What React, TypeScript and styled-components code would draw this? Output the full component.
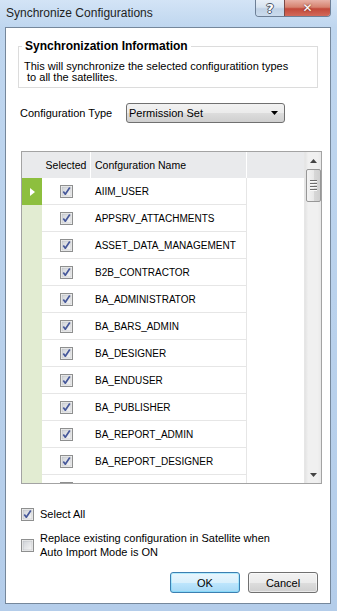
import React, { useId } from "react";
import styled, { createGlobalStyle } from "styled-components";

const Global = createGlobalStyle`
  html, body { margin: 0; padding: 0; background: #b6d0ec; }
  body { width: 337px; height: 611px; overflow: hidden; }
  * { box-sizing: border-box; }
`;

const Window = styled.div`
  width: 337px;
  height: 611px;
  display: flex;
  flex-direction: column;
  padding: 0 6px 7px 5px;
  background: linear-gradient(180deg, #d3e4f6 0px, #bfd6ef 27px, #b4cdea 100%);
  font-family: "Liberation Sans", Arial, sans-serif;
  font-size: 11px;
  color: #000;
`;

const TitleBar = styled.div`
  height: 27px;
  flex: none;
  display: flex;
  align-items: flex-start;
  padding-left: 1px;
`;

const Title = styled.div`
  font-size: 12px;
  line-height: 27px;
  color: #1e1e1e;
  font-family: "Liberation Sans", Arial, sans-serif;
`;

const CaptionButtons = styled.div`
  margin-left: auto;
  display: flex;
  border: 1px solid #6d7f96;
  border-top: none;
  border-radius: 0 0 4px 4px;
  overflow: hidden;
  height: 17px;
`;

const CapButton = styled.div<{ $close?: boolean }>`
  width: ${(p) => (p.$close ? 46 : 28)}px;
  height: 100%;
  display: flex;
  align-items: center;
  justify-content: center;
  font-family: "DejaVu Sans", sans-serif;
  font-weight: bold;
  font-size: ${(p) => (p.$close ? 12 : 13)}px;
  color: #fff;
  border-left: ${(p) => (p.$close ? "1px solid #7a4a46" : "none")};
  background: ${(p) =>
    p.$close
      ? "linear-gradient(180deg, #e8b1a6 0%, #d6826f 45%, #c3493a 55%, #d2695a 100%)"
      : "linear-gradient(180deg, #e8eff7 0%, #d7e3f0 45%, #c0d1e5 55%, #cbdbed 100%)"};
  text-shadow: ${(p) =>
    p.$close
      ? "0 0 2px #5a1d17"
      : "1px 0 0 #4a5566, -1px 0 0 #4a5566, 0 1px 0 #4a5566, 0 -1px 0 #4a5566"};
`;

const Client = styled.div`
  flex: 1;
  background: #fff;
  border: 1px solid #75879b;
  display: flex;
  flex-direction: column;
`;

const Group = styled.fieldset`
  margin: 12px 12px 0 12px;
  padding: 0 3px 4px 3px;
  border: 1px solid #dcdcdc;
  min-width: 0;
`;

const Legend = styled.legend`
  padding: 0 3px;
  font-weight: bold;
  font-size: 12px;
  line-height: 13px;
`;

const Description = styled.div`
  margin-top: 8px;
  padding-left: 2px;
  line-height: 11px;
  font-size: 11px;
  color: #000;
`;

const ConfigRow = styled.div`
  margin: 15px 0 0 14px;
  display: flex;
  align-items: center;
  height: 20px;
`;

const FieldLabel = styled.div`
  width: 106px;
  font-size: 11px;
`;

const Combo = styled.div`
  width: 159px;
  height: 20px;
  border: 1px solid #707070;
  border-radius: 3px;
  background: linear-gradient(180deg, #f2f2f2 0%, #ebebeb 50%, #dddddd 51%, #cfcfcf 100%);
  display: flex;
  align-items: center;
  padding: 0 6px 0 2px;
  font-size: 11px;
`;

const ComboText = styled.span`
  flex: 1;
`;

const Grid = styled.div`
  margin: 28px 0 0 15px;
  width: 301px;
  height: 333px;
  border: 1px solid #a3a3a3;
  display: flex;
  overflow: hidden;
`;

const GridMain = styled.div`
  flex: 1;
  display: flex;
  flex-direction: column;
  overflow: hidden;
  min-width: 0;
`;

const HeaderRow = styled.div`
  height: 26px;
  flex: none;
  display: flex;
  background: #e9eaec;
`;

const HeadCell = styled.div<{ $w?: number; $center?: boolean; $sep?: boolean }>`
  width: ${(p) => (p.$w ? `${p.$w}px` : "auto")};
  flex: ${(p) => (p.$w ? "none" : "1")};
  display: flex;
  align-items: center;
  justify-content: ${(p) => (p.$center ? "center" : "flex-start")};
  padding-left: ${(p) => (p.$center ? 0 : 4)}px;
  border-right: ${(p) => (p.$sep ? "1px solid #ffffff" : "none")};
  font-size: 10.5px;
  white-space: nowrap;
`;

const Body = styled.div`
  flex: 1;
  display: flex;
  overflow: hidden;
`;

const Rows = styled.div`
  display: flex;
  flex-direction: column;
`;

const Row = styled.div`
  display: flex;
  height: 27px;
  flex: none;
`;

const RowHead = styled.div<{ $current?: boolean }>`
  width: 20px;
  background: ${(p) => (p.$current ? "#8dbf3e" : "#e2ecd2")};
  display: flex;
  align-items: center;
  justify-content: center;
`;

const Cell = styled.div<{ $w: number; $center?: boolean; $last?: boolean }>`
  width: ${(p) => p.$w}px;
  border-bottom: 1px solid #e6e6e6;
  border-right: ${(p) => (p.$last ? "1px solid #e6e6e6" : "none")};
  display: flex;
  align-items: center;
  justify-content: ${(p) => (p.$center ? "center" : "flex-start")};
  padding-left: ${(p) => (p.$center ? 0 : 4)}px;
  font-size: 10px;
  white-space: nowrap;
  overflow: hidden;
`;

const Filler = styled.div`
  flex: 1;
  background: #fff;
`;

const ScrollBar = styled.div`
  width: 17px;
  flex: none;
  background: linear-gradient(90deg, #e3e3e3 0%, #f0f0f0 20%, #f0f0f0 80%, #e8e8e8 100%);
  border-left: 1px solid #e6e6e6;
  display: flex;
  flex-direction: column;
  align-items: center;
`;

const ArrowBox = styled.div`
  height: 17px;
  width: 100%;
  display: flex;
  align-items: center;
  justify-content: center;
  flex: none;
`;

const Thumb = styled.div`
  width: 15px;
  height: 33px;
  border: 1px solid #979797;
  border-radius: 2px;
  background: linear-gradient(90deg, #f3f3f3 0%, #e8e8e8 50%, #d8d8d8 51%, #cfcfcf 100%);
  display: flex;
  flex-direction: column;
  align-items: center;
  justify-content: center;
  gap: 1px;
  flex: none;
`;

const Grip = styled.div`
  width: 7px;
  height: 1px;
  background: #6c6c6c;
  box-shadow: 0 1px 0 #f8f8f8;
  margin-bottom: 1px;
`;

const Track = styled.div`
  flex: 1;
`;

const CheckRow = styled.div<{ $top: number }>`
  margin: ${(p) => p.$top}px 0 0 15px;
  display: flex;
  align-items: center;
  gap: 6px;
`;

const CheckText = styled.div`
  font-size: 11px;
  line-height: 14px;
`;

const Buttons = styled.div`
  margin: 13px 12px 0 0;
  display: flex;
  justify-content: flex-end;
  gap: 8px;
`;

const Button = styled.div<{ $default?: boolean }>`
  width: 70px;
  height: 21px;
  border: 1px solid ${(p) => (p.$default ? "#3c7fb1" : "#707070")};
  border-radius: 3px;
  background: ${(p) =>
    p.$default
      ? "linear-gradient(180deg, #eaf6fd 0%, #d9f0fc 50%, #bee6fd 51%, #a7d9f5 100%)"
      : "linear-gradient(180deg, #f2f2f2 0%, #ebebeb 50%, #dddddd 51%, #cfcfcf 100%)"};
  box-shadow: inset 0 0 0 1px ${(p) => (p.$default ? "#48d7fe55" : "#ffffff88")};
  display: flex;
  align-items: center;
  justify-content: center;
  font-size: 11px;
`;

function CheckBox({ checked }: { checked: boolean }) {
  const id = useId().replace(/:/g, "");
  return (
    <svg width="13" height="13" viewBox="0 0 13 13" style={{ flex: "none" }}>
      <defs>
        <linearGradient id={`g${id}`} x1="0" y1="0" x2="1" y2="1">
          <stop offset="0" stopColor="#cfd2d7" />
          <stop offset="1" stopColor="#f7f7f7" />
        </linearGradient>
      </defs>
      <rect x="0.5" y="0.5" width="12" height="12" fill="#f4f4f4" stroke="#8e8f8f" />
      <rect x="2" y="2" width="9" height="9" fill={`url(#g${id})`} stroke="#b4b6ba" strokeWidth="0.5" />
      {checked && (
        <path d="M3.3 6.4 L5.3 9.2 L9.8 2.6" fill="none" stroke="#46589a" strokeWidth="1.7" strokeLinejoin="round" />
      )}
    </svg>
  );
}

const names = [
  "AIIM_USER",
  "APPSRV_ATTACHMENTS",
  "ASSET_DATA_MANAGEMENT",
  "B2B_CONTRACTOR",
  "BA_ADMINISTRATOR",
  "BA_BARS_ADMIN",
  "BA_DESIGNER",
  "BA_ENDUSER",
  "BA_PUBLISHER",
  "BA_REPORT_ADMIN",
  "BA_REPORT_DESIGNER",
  "",
];

export default function App() {
  return (
    <>
      <Global />
      <Window>
        <TitleBar>
          <Title>Synchronize Configurations</Title>
          <CaptionButtons>
            <CapButton>?</CapButton>
            <CapButton $close>✕</CapButton>
          </CaptionButtons>
        </TitleBar>
        <Client>
          <Group>
            <Legend>Synchronization Information</Legend>
            <Description>
              This will synchronize the selected configuratition types
              <br />
              &nbsp;to all the satellites.
            </Description>
          </Group>
          <ConfigRow>
            <FieldLabel>Configuration Type</FieldLabel>
            <Combo>
              <ComboText>Permission Set</ComboText>
              <svg width="7" height="4" viewBox="0 0 7 4">
                <path d="M0 0 H7 L3.5 4 Z" fill="#000" />
              </svg>
            </Combo>
          </ConfigRow>
          <Grid>
            <GridMain>
              <HeaderRow>
                <HeadCell $w={20} />
                <HeadCell $w={49} $center $sep>
                  Selected
                </HeadCell>
                <HeadCell $w={156} $sep>
                  Confguration Name
                </HeadCell>
                <HeadCell />
              </HeaderRow>
              <Body>
                <Rows>
                  {names.map((n, i) => (
                    <Row key={i}>
                      <RowHead $current={i === 0}>
                        {i === 0 && (
                          <svg width="5" height="8" viewBox="0 0 5 8">
                            <path d="M0 0 L5 4 L0 8 Z" fill="#fff" />
                          </svg>
                        )}
                      </RowHead>
                      <Cell $w={49} $center>
                        <CheckBox checked />
                      </Cell>
                      <Cell $w={156} $last>
                        {n}
                      </Cell>
                    </Row>
                  ))}
                </Rows>
                <Filler />
              </Body>
            </GridMain>
            <ScrollBar>
              <ArrowBox>
                <svg width="7" height="4" viewBox="0 0 7 4">
                  <path d="M0 4 H7 L3.5 0 Z" fill="#444" />
                </svg>
              </ArrowBox>
              <Thumb>
                <Grip />
                <Grip />
                <Grip />
                <Grip />
              </Thumb>
              <Track />
              <ArrowBox>
                <svg width="7" height="4" viewBox="0 0 7 4">
                  <path d="M0 0 H7 L3.5 4 Z" fill="#444" />
                </svg>
              </ArrowBox>
            </ScrollBar>
          </Grid>
          <CheckRow $top={23}>
            <CheckBox checked />
            <CheckText>Select All</CheckText>
          </CheckRow>
          <CheckRow $top={10}>
            <CheckBox checked={false} />
            <CheckText>
              Replace existing configuration in Satellite when
              <br />
              Auto Import Mode is ON
            </CheckText>
          </CheckRow>
          <Buttons>
            <Button $default>OK</Button>
            <Button>Cancel</Button>
          </Buttons>
        </Client>
      </Window>
    </>
  );
}
